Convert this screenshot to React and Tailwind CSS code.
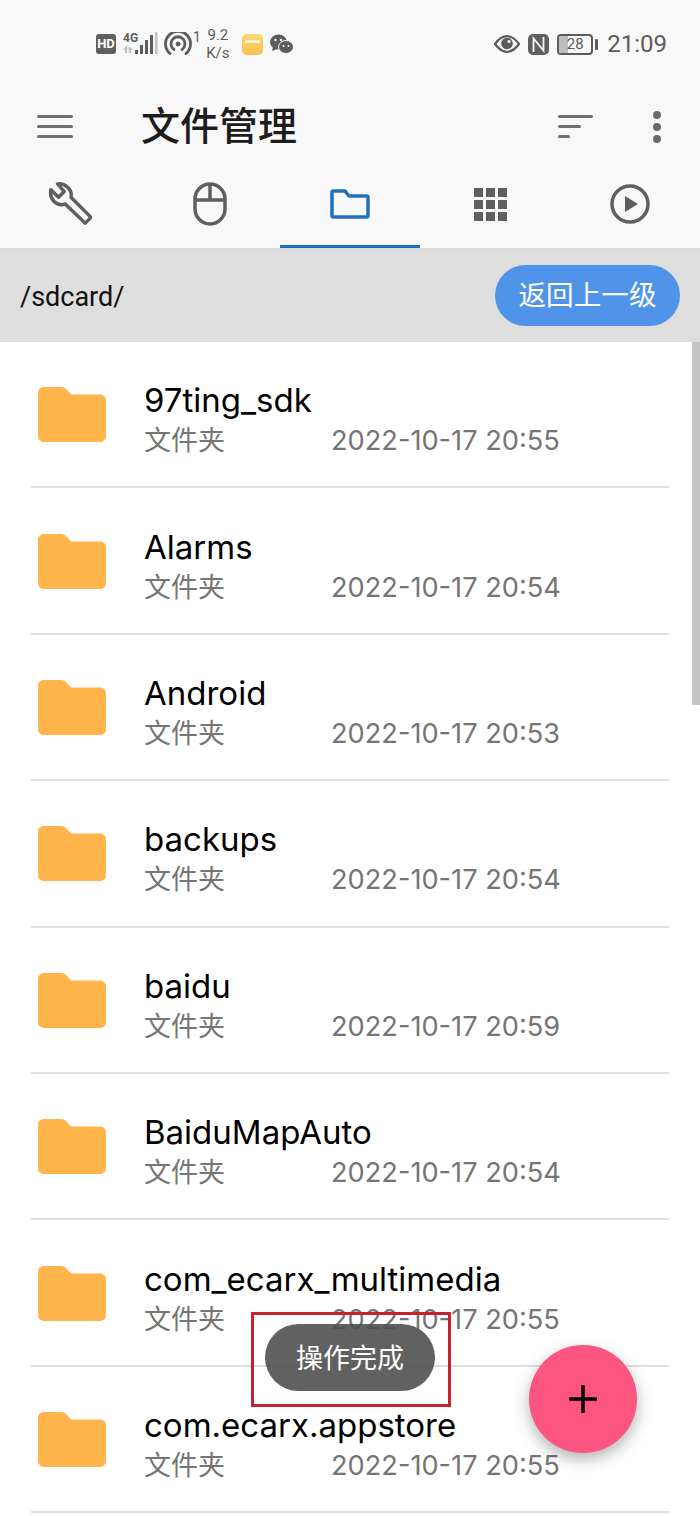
import React from 'react'

const FILES = [
  { name: '97ting_sdk', time: '2022-10-17 20:55' },
  { name: 'Alarms', time: '2022-10-17 20:54' },
  { name: 'Android', time: '2022-10-17 20:53' },
  { name: 'backups', time: '2022-10-17 20:54' },
  { name: 'baidu', time: '2022-10-17 20:59' },
  { name: 'BaiduMapAuto', time: '2022-10-17 20:54' },
  { name: 'com_ecarx_multimedia', time: '2022-10-17 20:55' },
  { name: 'com.ecarx.appstore', time: '2022-10-17 20:55' },
]

function FolderIcon() {
  return (
    <svg width="68" height="55" viewBox="0 0 68 55" className="shrink-0">
      <path d="M6 0h17c3 0 4 1 6 3l4 4.500h29c3.500 0 6 2.500 6 6V49c0 3.500-2.500 6-6 6H6c-3.500 0-6-2.500-6-6V6c0-3.500 2.500-6 6-6z" fill="#ffb54c" />
    </svg>
  )
}

function StatusLeft() {
  return (
    <div className="flex items-center h-[88px] pl-[96px] text-[#5c5c5c]">
      <div className="w-[20px] h-[20px] rounded-[3px] bg-[#5f5f5f] text-white text-[13px] font-bold leading-[20px] text-center">HD</div>
      <svg width="36" height="24" viewBox="0 0 36 24" className="ml-[7px]">
        <text x="0" y="10" fontSize="12" fontWeight="700" fill="#5c5c5c" fontFamily="Roboto">4G</text>
        <path d="M3 14v7M7 15v6" stroke="#bdbdbd" strokeWidth="2" />
        <path d="M0 17h10" stroke="#bdbdbd" strokeWidth="1" />
        <rect x="12" y="18" width="3" height="4" fill="#5c5c5c" />
        <rect x="17" y="13" width="3" height="9" fill="#5c5c5c" />
        <rect x="22" y="8" width="3" height="14" fill="#5c5c5c" />
        <rect x="27" y="3" width="3" height="19" fill="#5c5c5c" />
        <rect x="32" y="0" width="2.500" height="22" fill="#c4c4c4" />
      </svg>
      <svg width="28" height="24" viewBox="0 0 28 24" className="ml-[5px]" fill="none" stroke="#5c5c5c" strokeLinecap="round">
        <path d="M6 21.500A12.500 12.500 0 1 1 22 21.500" strokeWidth="2.800" />
        <path d="M10 17.500A7 7 0 1 1 18 17.500" strokeWidth="2.800" />
        <circle cx="14" cy="12" r="2" fill="#5c5c5c" strokeWidth="1" />
      </svg>
      <span className="text-[14px] leading-none -mt-[14px] ml-[1px]">1</span>
      <div className="w-[26px] ml-[4px] text-[15px] leading-[18px] text-center">
        <div>9.2</div>
        <div>K/s</div>
      </div>
      <div className="w-[21px] h-[21px] ml-[11px] rounded-[5px] bg-gradient-to-b from-[#fdd672] to-[#f8bf4d] flex flex-col items-center pt-[6px]">
        <div className="w-[15px] h-[3px] bg-[#fff3d0]" />
      </div>
      <svg width="24" height="20" viewBox="0 0 24 20" className="ml-[7px]">
        <ellipse cx="8.500" cy="8" rx="8.500" ry="7.500" fill="#5c5c5c" />
        <path d="M3 13l-1 4 5-2z" fill="#5c5c5c" />
        <ellipse cx="16" cy="13" rx="7.500" ry="6.500" fill="#5c5c5c" stroke="#f8f8f8" strokeWidth="1" />
        <circle cx="13.500" cy="12" r="1" fill="#f8f8f8" />
        <circle cx="18.500" cy="12" r="1" fill="#f8f8f8" />
        <circle cx="5.500" cy="6" r="1.200" fill="#f8f8f8" />
        <circle cx="11" cy="6" r="1.200" fill="#f8f8f8" />
      </svg>
    </div>
  )
}

function StatusRight() {
  return (
    <div className="flex items-center h-[88px] pr-[33px] text-[#5c5c5c]">
      <svg width="26" height="18" viewBox="0 0 26 18">
        <path d="M1 9C5 3.500 8.500 1.200 13 1.200S21 3.500 25 9c-4 5.500-7.500 7.800-12 7.800S5 14.500 1 9z" fill="none" stroke="#5c5c5c" strokeWidth="2.200" />
        <circle cx="13" cy="8.500" r="5.800" fill="#5c5c5c" />
        <circle cx="15" cy="6.500" r="1.600" fill="#f8f8f8" />
      </svg>
      <div className="w-[21px] h-[21px] ml-[8px] rounded-[5px] bg-[#5f5f5f] flex items-center justify-center">
        <svg width="15" height="19" viewBox="0 0 15 19" fill="none" stroke="#f8f8f8" strokeWidth="1.800">
          <path d="M2.500 17V3.500L12.500 15.500V2" />
        </svg>
      </div>
      <div className="relative w-[36px] h-[21px] ml-[8px] rounded-[4px] border-2 border-[#5c5c5c] overflow-hidden">
        <div className="w-[9px] h-full bg-[#bdbdbd]" />
        <span className="absolute inset-0 text-center text-[15px] leading-[17px]">28</span>
      </div>
      <div className="w-[3px] h-[11px] ml-[2px] rounded-[1px] bg-[#5c5c5c]" />
      <span className="ml-[9px] text-[24px] leading-none">21:09</span>
    </div>
  )
}

function TitleBar() {
  return (
    <div className="flex items-center h-[77px]">
      <div className="w-[36px] ml-[37px] flex flex-col gap-[6.5px]">
        <div className="h-[3.5px] rounded-full bg-[#707070]" />
        <div className="h-[3.5px] rounded-full bg-[#707070]" />
        <div className="h-[3.5px] rounded-full bg-[#707070]" />
      </div>
      <div className="ml-[68px] pt-[1px] text-[39px] leading-none font-medium text-[#1c1c1c]">文件管理</div>
      <div className="ml-auto flex flex-col gap-[6.5px] w-[36px]">
        <div className="h-[3.5px] w-[35px] rounded-full bg-[#707070]" />
        <div className="h-[3.5px] w-[23px] rounded-full bg-[#707070]" />
        <div className="h-[3.5px] w-[12px] rounded-full bg-[#707070]" />
      </div>
      <div className="ml-[59px] mr-[39px] flex flex-col gap-[4px]">
        <div className="w-[8px] h-[8px] rounded-full bg-[#6a6a6a]" />
        <div className="w-[8px] h-[8px] rounded-full bg-[#6a6a6a]" />
        <div className="w-[8px] h-[8px] rounded-full bg-[#6a6a6a]" />
      </div>
    </div>
  )
}

function Tabs() {
  return (
    <div className="grid grid-cols-5 h-[85px] border-b-2 border-[#dcdcdc]">
      <div className="flex items-center justify-center pb-[5px]">
        <svg width="44" height="44" viewBox="0 0 46 46" fill="none" stroke="#5f5f5f" strokeWidth="3.600" strokeLinejoin="round">
          <path d="M10 2C18 1 26 8 24 16L45 37L39 43L18 23C9 26 1 18 3 8L11 16L17 10Z" />
        </svg>
      </div>
      <div className="flex items-center justify-center pb-[5px]">
        <svg width="34" height="44" viewBox="0 0 34 44" fill="none" stroke="#5f5f5f" strokeWidth="3.500">
          <rect x="2" y="2" width="30" height="40" rx="15" />
          <path d="M2 18h30M17 2v16" />
        </svg>
      </div>
      <div className="relative flex items-center justify-center pb-[5px]">
        <svg width="40" height="30" viewBox="0 0 40 30" fill="none" stroke="#1f6fc0" strokeWidth="3.500" strokeLinejoin="round">
          <path d="M2 3.500c0-1 .5-1.500 1.500-1.500H15l4 5h17.500c1 0 1.500.5 1.500 1.500v18c0 1-.5 1.500-1.500 1.500h-33C2.500 28 2 27.500 2 26.500z" />
        </svg>
        <div className="absolute left-0 right-0 bottom-0 h-[3px] bg-[#1f6fc0]" />
      </div>
      <div className="flex items-center justify-center pb-[5px]">
        <div className="grid grid-cols-3 gap-[3px]">
          {Array.from({ length: 9 }).map((_, i) => (
            <div key={i} className="w-[9px] h-[9px] bg-[#5f5f5f]" />
          ))}
        </div>
      </div>
      <div className="flex items-center justify-center pb-[5px]">
        <svg width="40" height="40" viewBox="0 0 40 40">
          <circle cx="20" cy="20" r="18" fill="none" stroke="#5f5f5f" strokeWidth="3.500" />
          <path d="M15 12l13 8-13 8z" fill="#5f5f5f" />
        </svg>
      </div>
    </div>
  )
}

function FileRow({ name, time }) {
  return (
    <div className="h-[146.4px] flex flex-col">
      <div className="flex-1 flex items-center pl-[38px]">
        <div className="pt-[1px]">
          <FolderIcon />
        </div>
        <div className="ml-[38px] pt-[13px]">
          <div className="text-[33px] leading-[40px] text-black font-['Inter',sans-serif]">{name}</div>
          <div className="flex text-[#757575] text-[27px] leading-[40px] mt-[1px]">
            <span className="w-[187px]">文件夹</span>
            <span className="text-[27.2px] font-['Inter',sans-serif]">{time}</span>
          </div>
        </div>
      </div>
      <div className="h-[2px] mx-[31px] bg-[#dedede]" />
    </div>
  )
}

export default function App() {
  return (
    <div className="relative w-[700px] h-[1516px] overflow-hidden bg-white font-['Roboto','Noto_Sans_CJK_SC',sans-serif]">
      <div className="bg-[#f8f8f8]">
        <div className="flex justify-between">
          <StatusLeft />
          <StatusRight />
        </div>
        <TitleBar />
        <Tabs />
      </div>
      <div className="h-[92px] bg-[#dedede] flex items-center justify-between pl-[20px] pr-[20px]">
        <span className="pt-[3px] text-[27px] text-[#111111]">/sdcard/</span>
        <button className="w-[185px] h-[61px] mb-[1px] pt-[1px] rounded-full bg-[#4f94e8] text-white text-[27.6px]">返回上一级</button>
      </div>
      <div>
        {FILES.map((f) => (
          <FileRow key={f.name} name={f.name} time={f.time} />
        ))}
      </div>

      {/* scrollbar */}
      <div className="absolute right-0 top-[342px] w-[8px] h-[363px] bg-[#c4c4c4]" />

      {/* toast */}
      <div className="absolute left-[265px] top-[1324px] w-[170px] h-[67px] pt-[3px] rounded-full bg-[#505050]/90 flex items-center justify-center text-white text-[27px]">操作完成</div>
      <div className="absolute left-[251px] top-[1312px] w-[200px] h-[95px] border-[3px] border-[#c8202f]" />

      {/* add button */}
      <button className="absolute left-[529px] top-[1345px] w-[108px] h-[108px] rounded-full bg-[#fb5580] shadow-[0_6px_16px_rgba(0,0,0,0.3)] flex items-center justify-center">
        <svg width="28" height="28" viewBox="0 0 28 28" stroke="#000000" strokeWidth="3.500" strokeLinecap="round">
          <path d="M14 1v26M1 14h26" />
        </svg>
      </button>
    </div>
  )
}
